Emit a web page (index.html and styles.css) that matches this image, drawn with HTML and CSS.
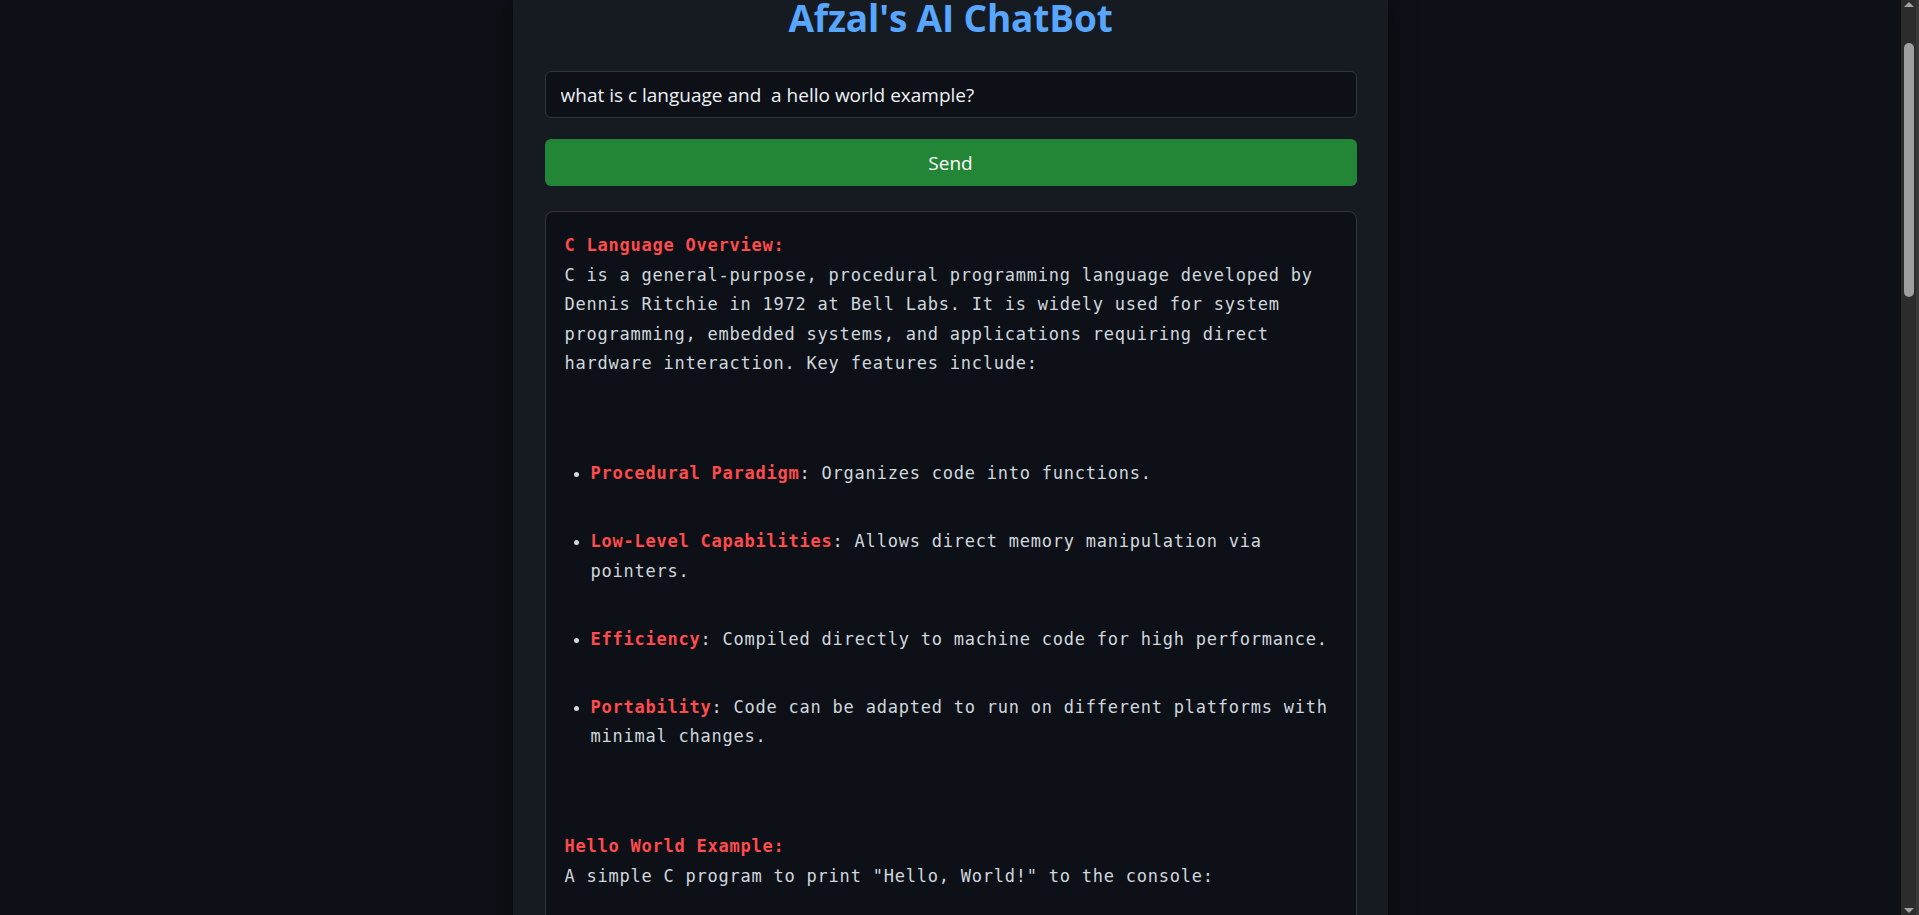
FILE: index.html
```html
<!DOCTYPE html>
<html lang="en">
<head>
<meta charset="utf-8">
<title>Afzal's AI ChatBot</title>
<link rel="stylesheet" href="styles.css">
</head>
<body>
<div class="app">
  <main class="page">
    <div class="container">
      <h1 class="title">Afzal's AI ChatBot</h1>
      <input class="prompt" type="text" value="what is c language and  a hello world example?">
      <button class="send" type="button">Send</button>
      <div class="response">
        <p><strong>C Language Overview:</strong><br>C is a general-purpose, procedural programming language developed by Dennis Ritchie in 1972 at Bell Labs. It is widely used for system programming, embedded systems, and applications requiring direct hardware interaction. Key features include:</p>
        <ul>
          <li><strong>Procedural Paradigm</strong>: Organizes code into functions.</li>
          <li><strong>Low-Level Capabilities</strong>: Allows direct memory manipulation via pointers.</li>
          <li><strong>Efficiency</strong>: Compiled directly to machine code for high performance.</li>
          <li><strong>Portability</strong>: Code can be adapted to run on different platforms with minimal changes.</li>
        </ul>
        <p><strong>Hello World Example:</strong><br>A simple C program to print "Hello, World!" to the console:</p>
        <pre class="code"><code>#include &lt;stdio.h&gt;

int main() {
    printf("Hello, World!\n");
    return 0;
}</code></pre>
        <p><strong>Explanation:</strong></p>
        <ul>
          <li><strong>#include &lt;stdio.h&gt;</strong>: Includes the standard input/output library.</li>
          <li><strong>int main()</strong>: The entry point of every C program.</li>
          <li><strong>printf()</strong>: Prints the text to the console.</li>
          <li><strong>return 0;</strong>: Ends the program successfully.</li>
        </ul>
      </div>
    </div>
  </main>
  <div class="scrollbar" aria-hidden="true">
    <div class="sb-btn"><span class="arrow up"></span></div>
    <div class="track"><div class="thumb"></div></div>
    <div class="sb-btn"><span class="arrow down"></span></div>
  </div>
</div>
</body>
</html>
```
FILE: styles.css
```css
html, body {
  margin: 0;
  padding: 0;
  height: 100%;
  background: #0d1117;
}

.app {
  display: flex;
  height: 100vh;
  overflow: hidden;
}

.page {
  flex: 1;
  min-width: 0;
  overflow: hidden;
  background: #0d1117;
}

.container {
  width: 875px;
  margin: 0 auto;
  padding: 0 31.5px 40px;
  box-sizing: border-box;
  background: #161b22;
  box-shadow: 0 0 22px rgba(0, 0, 0, 0.55);
  min-height: 100%;
}

.title {
  margin: 0 0 36px;
  font-family: "Open Sans", "Noto Sans", sans-serif;
  font-weight: 700;
  font-size: 37px;
  letter-spacing: -0.15px;
  line-height: 35px;
  color: #58a6ff;
  text-align: center;
}

.prompt {
  display: block;
  width: 100%;
  height: 47px;
  box-sizing: border-box;
  margin: 0;
  padding: 0 15px;
  background: #0d1117;
  border: 1px solid #30363d;
  border-radius: 6px;
  color: #eef2f6;
  font-family: "Open Sans", "Noto Sans", sans-serif;
  font-size: 19px;
  outline: none;
}

.send {
  display: block;
  width: 100%;
  height: 47px;
  margin: 21px 0 0;
  padding: 0;
  background: #238636;
  border: none;
  border-radius: 6px;
  color: #ffffff;
  font-family: "Open Sans", "Noto Sans", sans-serif;
  font-size: 19px;
}

.response {
  margin-top: 25px;
  padding: 19px 20px 19px 19px;
  background: #0d1117;
  border: 1px solid #30363d;
  border-radius: 8px;
  color: #d0d7de;
  font-family: "DejaVu Sans Mono", "Liberation Mono", monospace;
  font-size: 17px;
  letter-spacing: 0.77px;
  line-height: 29.5px;
}

.response p {
  margin: 0;
}

.response strong {
  color: #ff4b4b;
  font-weight: 700;
}

.response ul {
  margin: 80.5px 0;
  padding-left: 26px;
}

.response li + li {
  margin-top: 38.5px;
}

.code {
  margin: 80px 0;
  padding: 16px;
  background: #161b22;
  border-radius: 6px;
  font-family: inherit;
  line-height: 24px;
  color: #c9d1d9;
}

/* fake window scrollbar */
.scrollbar {
  width: 18px;
  flex: none;
  display: flex;
  flex-direction: column;
  background: #2c2c2c;
  border-right: 3px solid #383838;
  box-sizing: border-box;
}

.sb-btn {
  height: 17px;
  display: flex;
  align-items: center;
  justify-content: center;
}

.arrow {
  width: 0;
  height: 0;
  border-left: 5px solid transparent;
  border-right: 5px solid transparent;
}

.arrow.up {
  border-bottom: 5px solid #a3a3a3;
  margin-bottom: 8px;
}

.arrow.down {
  border-top: 5px solid #a3a3a3;
  margin-top: 8px;
}

.track {
  flex: 1;
  padding-top: 26px;
}

.thumb {
  width: 10px;
  height: 254px;
  margin: 0 auto;
  border-radius: 5px;
  background: #9f9f9f;
}
```
